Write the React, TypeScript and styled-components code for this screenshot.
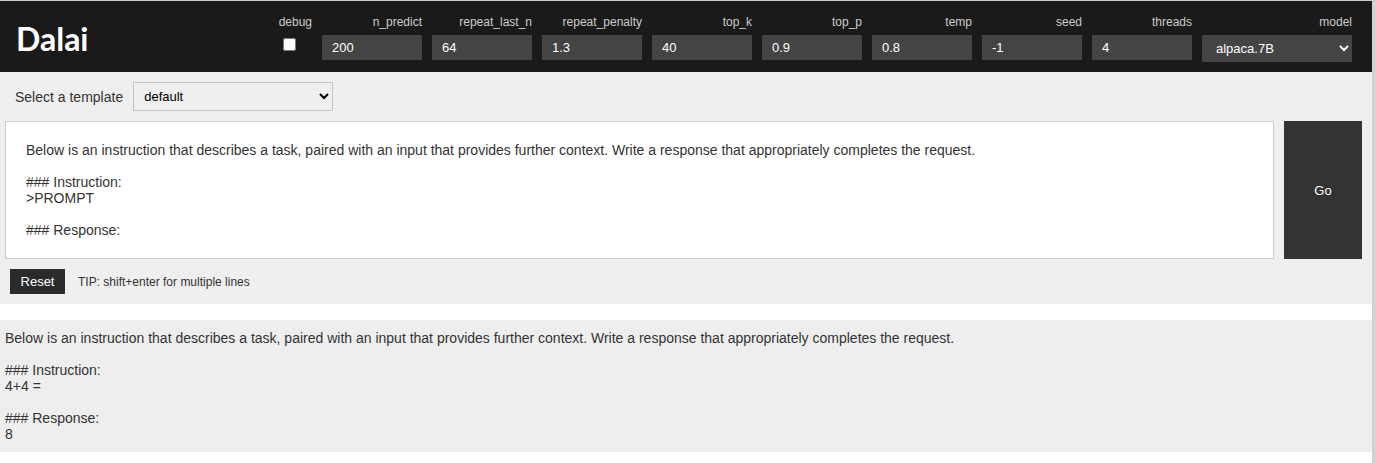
import React from "react";
import styled, { createGlobalStyle } from "styled-components";

const GlobalStyle = createGlobalStyle`
  html, body { margin: 0; padding: 0; background: #fff; }
  body { font-family: "Liberation Sans", Arial, sans-serif; }
  * { box-sizing: border-box; }
`;

const Page = styled.div`
  width: 1375px;
  min-height: 463px;
  border-top: 1px solid #c8c8c8;
  border-right: 3px solid #d2d2d2;
`;

const Header = styled.header`
  display: flex;
  justify-content: space-between;
  align-items: flex-start;
  height: 71px;
  padding: 14px 20px 0 16px;
  background: #1a1a1a;
`;

const Logo = styled.div`
  font-family: Lato, "Noto Sans", sans-serif;
  font-weight: 700;
  font-size: 32px;
  line-height: 47px;
  color: #fff;
`;

const Fields = styled.div`
  display: flex;
  gap: 10px;
`;

const Field = styled.div`
  display: flex;
  flex-direction: column;
  gap: 6px;
`;

const FieldLabel = styled.div`
  font-size: 12px;
  line-height: 14px;
  color: #ccc;
  text-align: right;
`;

const Check = styled.input`
  align-self: flex-start;
  width: 13px;
  height: 13px;
  margin: 3px 3px 3px 4px;
`;

const NumInput = styled.input`
  width: 100px;
  height: 25px;
  border: none;
  outline: none;
  background: #444;
  color: #fff;
  font-family: "Liberation Sans", Arial, sans-serif;
  font-size: 13px;
  padding: 0 10px;
`;

const ModelSelect = styled.select`
  width: 150px;
  height: 27px;
  border: none;
  outline: none;
  background: #444;
  color: #fff;
  font-family: "Liberation Sans", Arial, sans-serif;
  font-size: 13px;
  padding: 0 10px;
`;

const Main = styled.section`
  background: #efefef;
  padding: 10px 10px 10px 5px;
`;

const TemplateRow = styled.div`
  display: flex;
  align-items: center;
  gap: 10px;
  padding-left: 10px;
`;

const TemplateLabel = styled.span`
  font-size: 14px;
  color: #333;
`;

const TemplateSelect = styled.select`
  width: 200px;
  height: 29px;
  border: 1px solid #c4c4c4;
  background: #efefef;
  color: #000;
  font-family: "Liberation Sans", Arial, sans-serif;
  font-size: 13px;
  padding: 0 6px;
  outline: none;
`;

const PromptRow = styled.div`
  display: flex;
  gap: 10px;
  margin-top: 10px;
`;

const PromptBox = styled.div`
  flex: 1;
  background: #fff;
  border: 1px solid #ccc;
  padding: 20px;
  font-size: 14px;
  line-height: 16px;
  color: #333;
  white-space: pre-wrap;
`;

const GoButton = styled.button`
  width: 78px;
  border: none;
  background: #333;
  color: #fff;
  font-family: "Liberation Sans", Arial, sans-serif;
  font-size: 13px;
`;

const ControlRow = styled.div`
  display: flex;
  align-items: center;
  gap: 13px;
  margin-top: 10px;
  padding-left: 5px;
`;

const ResetButton = styled.button`
  width: 55px;
  height: 25px;
  border: none;
  padding: 0;
  background: #2b2b2b;
  color: #fff;
  font-family: "Liberation Sans", Arial, sans-serif;
  font-size: 13px;
`;

const Tip = styled.span`
  font-size: 12px;
  color: #333;
`;

const Output = styled.div`
  margin-top: 16px;
  background: #eee;
  padding: 10px 5px;
  font-size: 14px;
  line-height: 16px;
  color: #333;
  white-space: pre-wrap;
`;

const numeric: [string, string][] = [
  ["n_predict", "200"],
  ["repeat_last_n", "64"],
  ["repeat_penalty", "1.3"],
  ["top_k", "40"],
  ["top_p", "0.9"],
  ["temp", "0.8"],
  ["seed", "-1"],
  ["threads", "4"],
];

const prompt =
  "Below is an instruction that describes a task, paired with an input that provides further context. Write a response that appropriately completes the request.\n\n### Instruction:\n>PROMPT\n\n### Response:\n";

const output =
  "Below is an instruction that describes a task, paired with an input that provides further context. Write a response that appropriately completes the request.\n\n### Instruction:\n4+4 =\n\n### Response:\n8";

export default function App() {
  return (
    <>
      <GlobalStyle />
      <Page>
        <Header>
          <Logo>Dalai</Logo>
          <Fields>
            <Field>
              <FieldLabel>debug</FieldLabel>
              <Check type="checkbox" />
            </Field>
            {numeric.map(([name, value]) => (
              <Field key={name}>
                <FieldLabel>{name}</FieldLabel>
                <NumInput type="text" defaultValue={value} />
              </Field>
            ))}
            <Field>
              <FieldLabel>model</FieldLabel>
              <ModelSelect defaultValue="alpaca.7B">
                <option value="alpaca.7B">alpaca.7B</option>
              </ModelSelect>
            </Field>
          </Fields>
        </Header>
        <Main>
          <TemplateRow>
            <TemplateLabel>Select a template</TemplateLabel>
            <TemplateSelect defaultValue="default">
              <option value="default">default</option>
            </TemplateSelect>
          </TemplateRow>
          <PromptRow>
            <PromptBox>{prompt}</PromptBox>
            <GoButton>Go</GoButton>
          </PromptRow>
          <ControlRow>
            <ResetButton>Reset</ResetButton>
            <Tip>TIP: shift+enter for multiple lines</Tip>
          </ControlRow>
        </Main>
        <Output>{output}</Output>
      </Page>
    </>
  );
}
